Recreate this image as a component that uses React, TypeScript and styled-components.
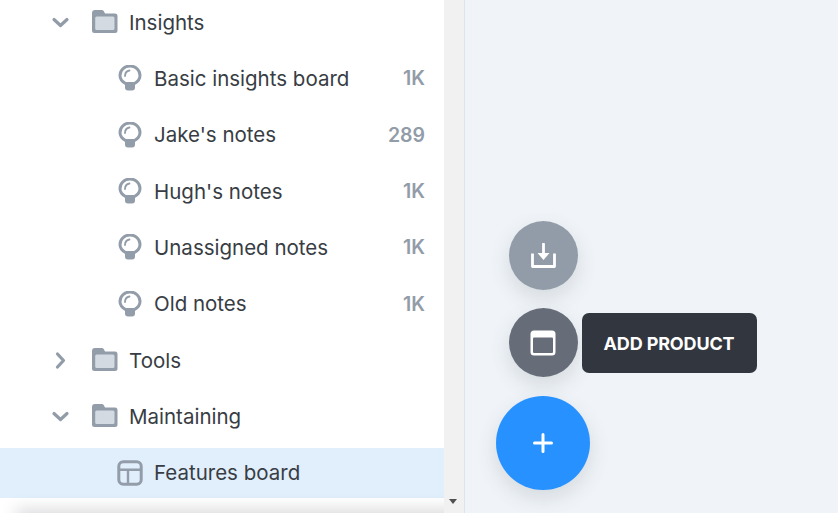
import React from "react";
import styled, { createGlobalStyle } from "styled-components";

const GlobalStyle = createGlobalStyle`
    html, body {
        margin: 0;
        height: 100%;
        overflow: hidden;
    }

    body {
        font-family: "Inter", "Lato", sans-serif;
    }
`;

const Page = styled.div`
    position: relative;
    display: flex;
    width: 838px;
    height: 513px;
    overflow: hidden;
    background: #f0f4f8;
`;

const Sidebar = styled.aside`
    position: relative;
    width: 444px;
    height: 513px;
    flex: none;
    overflow: hidden;
    background: #fff;

    &::after {
        content: "";
        position: absolute;
        left: 20px;
        right: -20px;
        bottom: -14px;
        height: 14px;
        box-shadow: 0 0 16px 4px rgba(70, 75, 85, 0.2);
    }
`;

const Tree = styled.ul`
    list-style: none;
    margin: -3px 0 0;
    padding: 0;
    display: flex;
    flex-direction: column;
    gap: 6.35px;
`;

const Row = styled.li<{ $child?: boolean; $selected?: boolean }>`
    height: 50px;
    display: flex;
    align-items: center;
    padding: 0 19px 0 ${({ $child }) => ($child ? "117px" : "51px")};
    background: ${({ $selected }) => ($selected ? "#e1eefb" : "transparent")};
    color: #383d44;
    font-size: 20.500px;
`;

const Chevron = styled.svg`
    width: 19px;
    height: 19px;
    flex: none;
    margin-right: 22px;
    fill: none;
    stroke: #919ca8;
    stroke-width: 3.200;
    stroke-linecap: round;
    stroke-linejoin: round;
`;

const Icon = styled.svg`
    width: 26px;
    height: 26px;
    flex: none;
`;

const RowLabel = styled.span`
    flex: 1;
    white-space: nowrap;
    margin-left: 11px;
`;

const Count = styled.span`
    color: #929ca8;
    font-weight: 600;
    font-size: 19.500px;
`;

const Scrollbar = styled.div`
    position: relative;
    width: 20px;
    flex: none;
    background: #f1f1f1;
    border-right: 1px solid #dde5ec;

    &::after {
        content: "";
        position: absolute;
        left: 5px;
        bottom: 9px;
        border-left: 4px solid transparent;
        border-right: 4px solid transparent;
        border-top: 5px solid #505050;
    }
`;

const FabStack = styled.div`
    position: absolute;
    left: 496px;
    top: 221px;
    width: 94px;
    display: flex;
    flex-direction: column;
    align-items: center;
    gap: 18.400px;
`;

const Fab = styled.button<{ $color: string; $size: number }>`
    position: relative;
    width: ${({ $size }) => $size}px;
    height: ${({ $size }) => $size}px;
    flex: none;
    padding: 0;
    border: 0;
    border-radius: 50%;
    display: flex;
    align-items: center;
    justify-content: center;
    background: ${({ $color }) => $color};
    box-shadow: 0 8px 20px rgba(70, 80, 95, 0.16);
    color: #fff;
`;

const Tooltip = styled.div`
    position: absolute;
    left: 73px;
    top: 5px;
    width: 175px;
    height: 60px;
    border-radius: 7px;
    display: flex;
    align-items: center;
    justify-content: center;
    background: #32363e;
    color: #fff;
    font-family: "Inter", sans-serif;
    font-size: 18px;
    font-weight: 700;
    letter-spacing: -0.15px;
    white-space: nowrap;
`;

const FolderIcon = () => (
    <Icon viewBox="0 0 26 26">
        <path
            d="M0 4A3 3 0 0 1 3 1h6.500c1.200 0 1.900.5 2.500 1.500L13 4.500h10a2.500 2.500 0 0 1 2.500 2.500v14.500a2.500 2.500 0 0 1-2.500 2.500H2.500A2.500 2.500 0 0 1 0 21.500z"
            fill="#929da9"
        />
        <rect x="3.200" y="7.500" width="19.300" height="13.500" rx="1.500" fill="#d3dae2" />
    </Icon>
);

const BulbIcon = () => (
    <Icon viewBox="0 0 26 26">
        <path
            d="M8.500 18.500C5 16.500 3 14 3 10.500a10 9.500 0 0 1 20 0c0 3.500-2 6-5.500 8z"
            fill="#fff"
            stroke="#929da9"
            strokeWidth="3"
            strokeLinejoin="round"
        />
        <path d="M8 18.500h10v4a3 3 0 0 1-3 3h-4a3 3 0 0 1-3-3z" fill="#929da9" />
        <path
            d="M8 11C8 8 10 6 12.500 5.500"
            fill="none"
            stroke="#929da9"
            strokeWidth="1.800"
            strokeLinecap="round"
        />
    </Icon>
);

const BoardIcon = () => (
    <Icon viewBox="0 0 26 26" fill="none" stroke="#929da9" strokeWidth="3">
        <rect x="1.800" y="1.800" width="22.400" height="22.400" rx="4.500" />
        <path d="M1.800 9.800h22.400M11 9.800v14.400" strokeWidth="2.400" />
    </Icon>
);

const DownloadIcon = () => (
    <svg width="25" height="25" viewBox="0 0 25 25" fill="none">
        <path d="M1.500 10.500v13h22v-13" stroke="#fff" strokeWidth="2.800" strokeLinejoin="round" />
        <path d="M12.500 1v10" stroke="#fff" strokeWidth="2.800" strokeLinecap="round" />
        <path d="M6.500 10h12l-6 7z" fill="#fff" />
    </svg>
);

const WindowIcon = () => (
    <svg width="26" height="26" viewBox="0 0 26 26">
        <rect x="0.500" y="0.500" width="25" height="25" rx="3.500" fill="#fff" />
        <rect x="3" y="7.500" width="20" height="15.500" rx="1" fill="#666d79" />
    </svg>
);

const PlusIcon = () => (
    <svg width="20" height="20" viewBox="0 0 20 20" fill="none" stroke="#fff" strokeWidth="3" strokeLinecap="round">
        <path d="M10 1.500v17M1.500 10h17" />
    </svg>
);

const ChevronDown = () => (
    <Chevron viewBox="0 0 19 19">
        <path d="M3 6.500l6.500 6 6.500-6" />
    </Chevron>
);

const ChevronRight = () => (
    <Chevron viewBox="0 0 19 19">
        <path d="M6.500 3l6 6.500-6 6.500" />
    </Chevron>
);

const notes = [
    { name: "Basic insights board", count: "1K" },
    { name: "Jake's notes", count: "289" },
    { name: "Hugh's notes", count: "1K" },
    { name: "Unassigned notes", count: "1K" },
    { name: "Old notes", count: "1K" },
];

const App = () => (
    <Page>
        <GlobalStyle />
        <Sidebar>
            <Tree>
                <Row>
                    <ChevronDown />
                    <FolderIcon />
                    <RowLabel>Insights</RowLabel>
                </Row>
                {notes.map(({ name, count }) => (
                    <Row $child key={name}>
                        <BulbIcon />
                        <RowLabel>{name}</RowLabel>
                        <Count>{count}</Count>
                    </Row>
                ))}
                <Row>
                    <ChevronRight />
                    <FolderIcon />
                    <RowLabel>Tools</RowLabel>
                </Row>
                <Row>
                    <ChevronDown />
                    <FolderIcon />
                    <RowLabel>Maintaining</RowLabel>
                </Row>
                <Row $child $selected>
                    <BoardIcon />
                    <RowLabel>Features board</RowLabel>
                </Row>
            </Tree>
        </Sidebar>
        <Scrollbar />
        <FabStack>
            <Fab $color="#929ca8" $size={69}>
                <DownloadIcon />
            </Fab>
            <Fab $color="#666d79" $size={69}>
                <WindowIcon />
                <Tooltip>ADD PRODUCT</Tooltip>
            </Fab>
            <Fab $color="#2792ff" $size={94}>
                <PlusIcon />
            </Fab>
        </FabStack>
    </Page>
);

export default App;
